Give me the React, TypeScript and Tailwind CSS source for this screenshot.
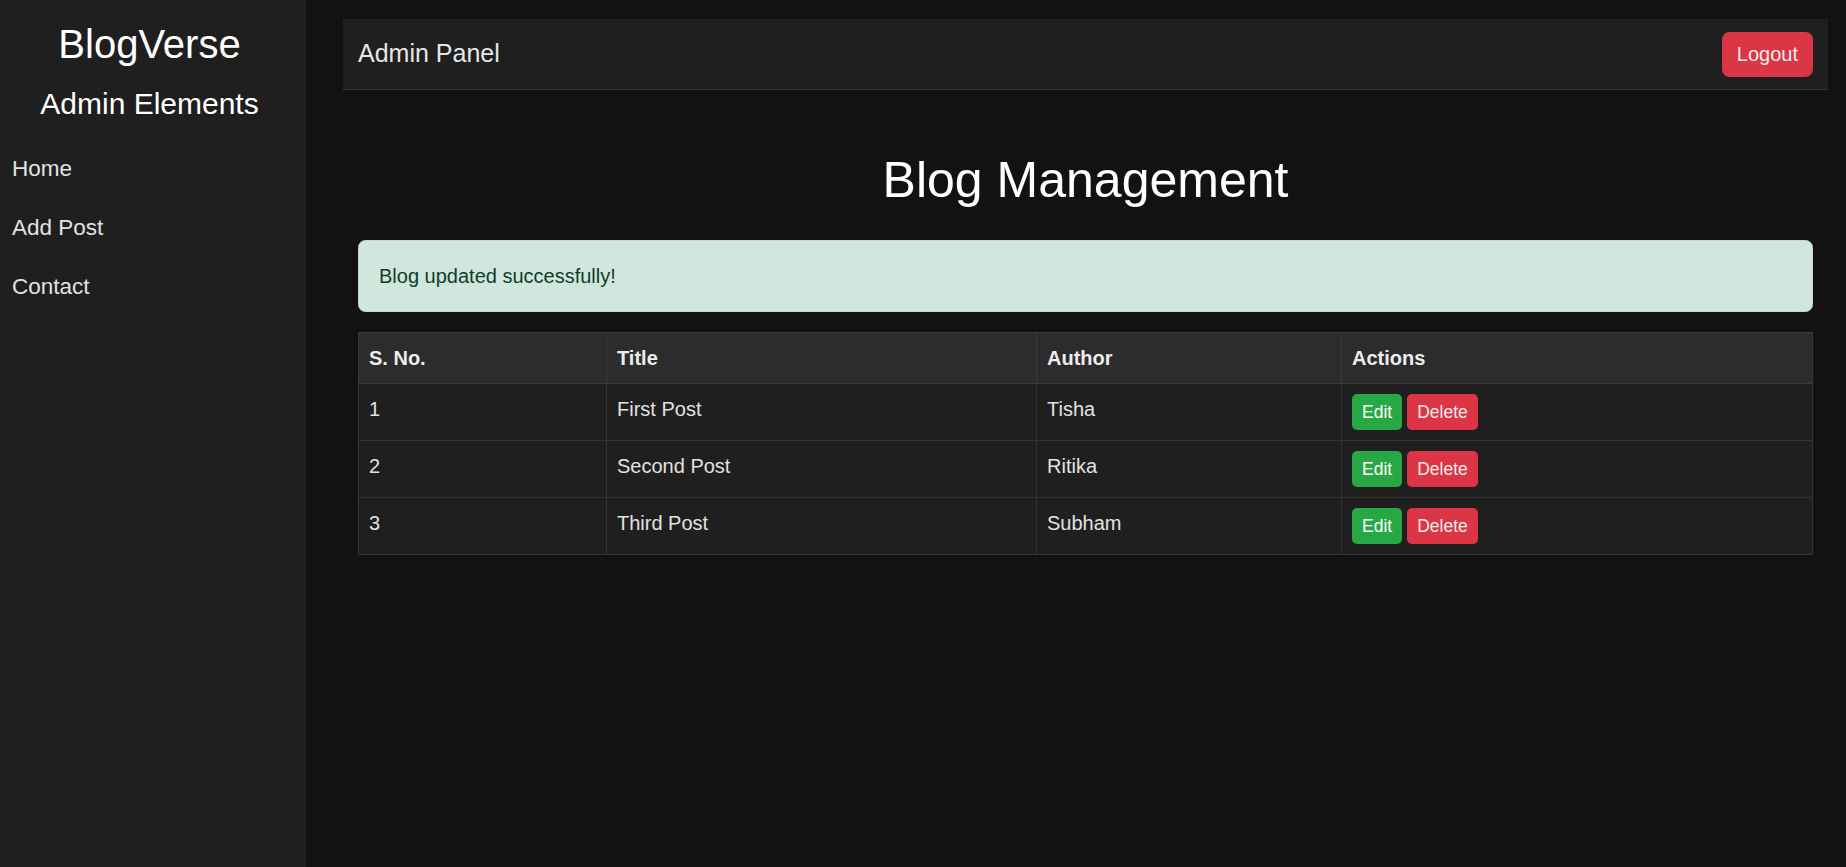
const posts = [
  { id: 1, title: "First Post", author: "Tisha" },
  { id: 2, title: "Second Post", author: "Ritika" },
  { id: 3, title: "Third Post", author: "Subham" },
]

const links = ["Home", "Add Post", "Contact"]

export default function App() {
  return (
    <div className="flex min-h-screen bg-[#121212] font-['Liberation_Sans',Arial,sans-serif] text-white">
      <aside className="w-[306px] shrink-0 bg-[#1f1f1f] pt-[20px]">
        <h1 className="pr-[7px] text-center text-[40px] leading-[48px]">BlogVerse</h1>
        <h2 className="mt-[18px] pr-[7px] text-center text-[30px] leading-[36px]">Admin Elements</h2>
        <nav className="mt-[17px]">
          {links.map((l) => (
            <a key={l} href="#" className="flex h-[59px] items-center px-[12px] text-[22.5px] text-[#e2e2e2]">
              {l}
            </a>
          ))}
        </nav>
      </aside>

      <main className="flex-1 pl-[37px] pr-[18px] pt-[19px]">
        <header className="flex h-[71px] items-center justify-between border-b border-[#333333] bg-[#1f1f1f] px-[15px]">
          <span className="text-[25px] text-[#e6e6e6]">Admin Panel</span>
          <button className="h-[45px] rounded-[7.5px] bg-[#dc3545] px-[15px] text-[20px] text-[#ececec]">Logout</button>
        </header>

        <div className="px-[15px]">
          <h1 className="mt-[60px] mb-[30px] text-center text-[50px] leading-[60px]">Blog Management</h1>

          <div className="mb-[20px] rounded-[7.5px] border border-[#badbcc] bg-[#d1e7dd] px-[20px] py-[20px] text-[20px] leading-[30px] text-[#0f3d2a]">
            Blog updated successfully!
          </div>

          <table className="w-full table-fixed border-collapse text-[20px] leading-[30px]">
            <colgroup>
              <col className="w-[248px]" />
              <col className="w-[430px]" />
              <col className="w-[305px]" />
              <col />
            </colgroup>
            <thead>
              <tr className="bg-[#2c2c2c] text-left font-bold text-[#ededed]">
                <th className="border border-[#3a3a3a] p-[10px]">S. No.</th>
                <th className="border border-[#3a3a3a] p-[10px]">Title</th>
                <th className="border border-[#3a3a3a] p-[10px]">Author</th>
                <th className="border border-[#3a3a3a] p-[10px]">Actions</th>
              </tr>
            </thead>
            <tbody>
              {posts.map((p) => (
                <tr key={p.id} className="bg-[#1f1f1f] align-top text-[#e2e2e2]">
                  <td className="border border-[#333333] p-[10px]">{p.id}</td>
                  <td className="border border-[#333333] p-[10px]">{p.title}</td>
                  <td className="border border-[#333333] p-[10px]">{p.author}</td>
                  <td className="border border-[#333333] p-[10px]">
                    <div className="flex gap-[5px]">
                      <button className="rounded-[5px] bg-[#28a745] px-[10px] py-[5px] text-[17.5px] leading-[26px] text-white">Edit</button>
                      <button className="rounded-[5px] bg-[#dc3545] px-[10px] py-[5px] text-[17.5px] leading-[26px] text-[#ececec]">Delete</button>
                    </div>
                  </td>
                </tr>
              ))}
            </tbody>
          </table>
        </div>
      </main>
    </div>
  )
}
